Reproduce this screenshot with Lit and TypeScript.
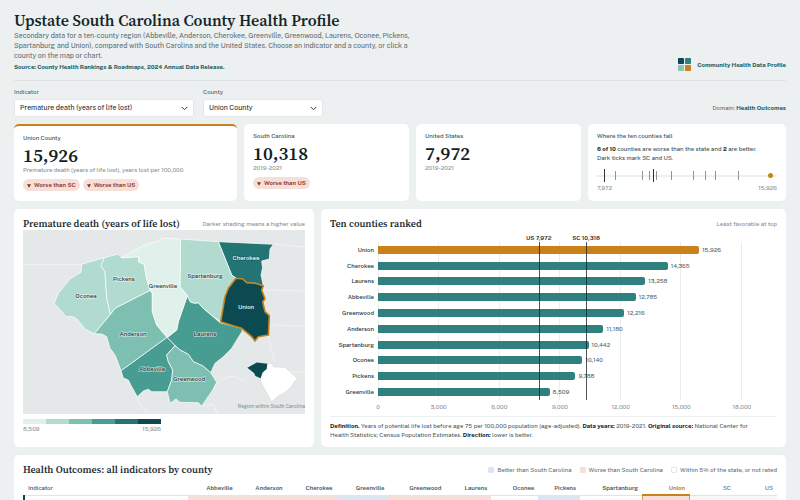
import { LitElement, html, svg, css, nothing } from 'lit';

interface County { name: string; value: number; fill: string; path: string; lx: number; ly: number; light?: boolean }

const LIGHT = '#b1dbce', MID = '#7dbfb1', DEEP = '#489d92', DARK = '#227475', DARKEST = '#0b4a50', PALE = '#e0f0ea';
const SCALE = [PALE, LIGHT, MID, DEEP, DARK, DARKEST];

const COUNTIES: County[] = [
  { name: 'Cherokee', value: 14365, fill: DARK, lx: 246, ly: 260, light: true,
    path: 'M218.3 241.7L273.3 244.3 270 249 269.3 259 261.7 261 262.5 268 261 275 263.3 285.5 255 283.3 246.7 282.7 242.7 279 236 278.3 231.7 275Z' },
  { name: 'Laurens', value: 13258, fill: DEEP, lx: 205, ly: 336,
    path: 'M187.3 295.7L190.5 302 195 303.3 198.3 302.7 203.3 308.3 210 314 220 322.7 241.7 328.3 242.3 331 231.7 348.3 223 357 215 363.3 210.7 372.7 203 366 193.3 361.7 188.3 354.3 180 350 175 345.7 167.3 337.7 176.7 330 178.3 321.7Z' },
  { name: 'Abbeville', value: 12785, fill: DEEP, lx: 152, ly: 371,
    path: 'M121 370.7L167 337.3 175 345.7 166.7 355 168.3 361.7 172.7 370 171.7 380 167.3 391.7 151.7 391.7 148.3 389.3 143.3 391 137.3 396.7 131.7 386.7 128.3 380 123.3 378Z' },
  { name: 'Greenwood', value: 12216, fill: MID, lx: 189, ly: 381,
    path: 'M175 345.7L180 350 188.3 354.3 193.3 361.7 203 366 210.7 372.7 216.7 382.3 212.7 390 201.7 406 198.3 402.7 180 402.3 176 399 170 403.3 167.3 391.7 171.7 380 172.7 370 168.3 361.7 166.7 355Z' },
  { name: 'Anderson', value: 11180, fill: MID, lx: 133, ly: 335.5,
    path: 'M94.3 333.7L110.3 314.3 115 308.3 150 290.3 152.3 293.3 152.3 311.7 156.7 325 167 337.3 121 370.7 118.3 363.3 115 355 110 348.3 106.7 336.7 102 334Z' },
  { name: 'Spartanburg', value: 10442, fill: LIGHT, lx: 205, ly: 278,
    path: 'M180.5 239L218.3 241.7 231.7 275 236 278.3 228.3 288.3 225 296.7 220.7 321.7 210 314 203.3 308.3 198.3 302.7 195 303.3 190.5 302 187.3 295.7 180 286.7Z' },
  { name: 'Oconee', value: 10140, fill: LIGHT, lx: 86, ly: 297.5,
    path: 'M81.7 264.3L104.3 257.7 101 265.7 105 271.7 106.7 298 110.3 314.3 94.3 333.7 85 329 77 319 73.3 316.7 66 316.5 54.3 303.3 58.3 293.3 70 279 81 272.3Z' },
  { name: 'Pickens', value: 9788, fill: LIGHT, lx: 124, ly: 280.5,
    path: 'M104.3 257.7L118 254 121.7 257.7 139 256.7 138.3 261.7 144.3 264.3 146 276 150 290.3 115 308.3 110.3 314.3 106.7 298 105 271.7 101 265.7Z' },
  { name: 'Greenville', value: 8509, fill: PALE, lx: 163, ly: 287.5,
    path: 'M121.7 257.7L131 252 139 248 150 243 156 242 163.3 238.3 180.5 239 180 286.7 187.3 295.7 178.3 321.7 176.7 330 167 337.3 156.7 325 152.3 311.7 152.3 293.3 150 290.3 146 276 144.3 264.3 138.3 261.7 139 256.7Z' },
  { name: 'Union', value: 15926, fill: DARKEST, lx: 246, ly: 308.5, light: true,
    path: 'M236 278.3L242.7 279 246.7 282.7 255 283.3 263.3 285.7 261.7 290 265 299 262.7 301.7 265 311.7 269.3 315.7 268.5 335 258.3 336.7 255 341 251.7 336.7 241.7 328.3 234 326 220.7 321.7 225 296.7 228.3 288.3Z' },
];

const US = 7972, SC = 10318, AXIS_MAX = 18000;
const ranked = [...COUNTIES].sort((a, b) => b.value - a.value);
const fmt = (n: number) => n.toLocaleString('en-US');
const pct = (n: number) => `${(n / AXIS_MAX) * 100}%`;
const strip = (n: number) => `${3.9 + ((n - US) / (15926 - US)) * 92.5}%`;

const COLUMNS: [string, number, string][] = [
  ['Abbeville', 49, 'worse'], ['Anderson', 50, 'worse'], ['Cherokee', 50, 'worse'], ['Greenville', 52, 'better'],
  ['Greenwood', 57, 'worse'], ['Laurens', 46, 'worse'], ['Oconee', 47, ''], ['Pickens', 42, 'better'],
  ['Spartanburg', 62, ''], ['Union', 47, 'worse picked'], ['SC', 46, 'ref'], ['US', 42, 'ref'],
];

class AppRoot extends LitElement {
  static properties = { county: { state: true } };
  declare county: string;

  constructor() {
    super();
    this.county = 'Union';
  }

  static styles = css`
    :host {
      display: block;
      background: #ecf0f0;
      color: #18262b;
      font: 6px/8px "Public Sans", Inter, "Liberation Sans", sans-serif;
      --serif: "Source Serif 4", "Liberation Serif", serif;
      --muted: #5b6a6e;
      --faint: #7f8b8e;
      --teal: #1b5a60;
    }
    * { box-sizing: border-box; }
    h1, h2, h3, p { margin: 0; }
    button, select { font: inherit; color: inherit; }
    .page { padding: 10px 14px 0; }
    header { display: flex; justify-content: space-between; align-items: flex-end; padding-bottom: 9px; border-bottom: 1px solid #dde2e2; }
    h1 { font: 600 16px/20px var(--serif); color: #14252a; }
    .lede { max-width: 404px; font-size: 7px; line-height: 10px; color: var(--muted); margin-top: 1px; }
    .source { font-weight: 700; color: var(--teal); margin-top: 2px; }
    .brand { display: flex; align-items: center; gap: 6px; font-weight: 700; color: var(--teal); }
    .brand svg { width: 13px; height: 13px; }
    .controls { display: flex; align-items: flex-end; gap: 9px; margin: 7px 0; }
    .field { display: grid; gap: 3px; }
    .field label { font-weight: 500; color: var(--muted); }
    .picker { display: grid; align-items: center; }
    .picker > * { grid-area: 1 / 1; }
    .picker select { appearance: none; width: 180px; height: 18px; padding: 0 20px 0 5px; border: 1px solid #e2e7e7; border-radius: 3px; background: #fff; font-size: 7px; }
    .picker.narrow select { width: 120px; }
    .picker svg { justify-self: end; width: 7px; height: 7px; margin-right: 6px; pointer-events: none; }
    .domain { margin-left: auto; color: var(--muted); padding-bottom: 5px; }
    .domain b { color: var(--teal); font-weight: 700; }
    .card { background: #fff; border-radius: 5px; padding: 8px 9px; }
    .stats { display: grid; grid-template-columns: 223fr 165fr 165fr 198fr; gap: 7px; }
    .stats .card { min-height: 77px; }
    .stats .lead { border-top: 2px solid #c9811b; }
    .stats h3 { font: inherit; font-weight: 500; color: #46565a; }
    .big { font: 600 19px/22px var(--serif); color: #111f24; margin-top: 2px; }
    .note { color: var(--faint); }
    .pills { display: flex; gap: 3px; margin-top: 5px; }
    .pill { display: flex; align-items: center; gap: 3px; height: 12px; padding: 0 4px; border-radius: 6px; background: #f7dfd9; color: #8c2b20; font-weight: 600; }
    .pill svg { width: 4px; height: 4px; margin-top: 1px; }
    .fall { line-height: 9px; margin-top: 4px; color: #33444a; }
    .fall b { color: #14252a; }
    .strip { position: relative; height: 14px; margin-top: 7px; }
    .strip::before { content: ""; position: absolute; inset: 6px 0 auto; height: 2px; background: #ebeeee; }
    .tick { position: absolute; top: 2px; width: 1px; height: 9px; background: #8b9698; }
    .tick.mark { top: 0; height: 13px; background: #26363b; }
    .dot { position: absolute; top: 4px; width: 5px; height: 5px; margin-left: -3px; border-radius: 50%; background: #c9811b; }
    .ends { display: flex; justify-content: space-between; color: var(--faint); margin-top: 1px; }
    .panels { display: grid; grid-template-columns: 300fr 465fr; gap: 7px; margin: 8px 0; }
    .head { display: flex; justify-content: space-between; align-items: center; }
    h2 { font: 600 10px/13px var(--serif); color: #18292e; }
    .head span { color: var(--faint); }
    .map { display: block; width: 100%; height: auto; }
    .map text { font-size: 6px; font-weight: 500; text-anchor: middle; fill: #22343a; stroke: #fff; stroke-opacity: .6; stroke-width: 1.4px; stroke-linejoin: round; paint-order: stroke; pointer-events: none; }
    .map text.light { fill: #fff; stroke: #0b4a50; stroke-opacity: .4; }
    .map text.caption { font-size: 5px; font-weight: 400; fill: #7f8b8e; stroke: none; text-anchor: end; }
    .shape { stroke: #fff; stroke-width: .7px; stroke-linejoin: round; cursor: pointer; }
    .shape.on { stroke: #c9811b; stroke-width: 1.6px; }
    .lines { fill: none; stroke: #f6f8f8; stroke-width: .7px; }
    .legend { width: 138px; margin-top: 5px; color: var(--muted); }
    .ramp { display: grid; grid-template-columns: repeat(6, 1fr); height: 5px; }
    .chart { display: grid; grid-template-columns: 44px 1fr; column-gap: 4px; padding: 12px 35px 0 0; }
    .names, .bars { display: grid; grid-template-rows: repeat(10, 1fr); height: 158px; align-items: center; }
    .names { text-align: right; color: #26363b; font-weight: 500; }
    .bars { position: relative; background: repeating-linear-gradient(to right, #e9edee 0 1px, transparent 1px calc(100% / 6)); border-right: 1px solid #e9edee; }
    .row { display: flex; align-items: center; gap: 3px; color: #46565a; }
    .bar { height: 8px; padding: 0; border: 0; border-radius: 0 2px 2px 0; background: #2f807e; cursor: pointer; }
    .bar.on { background: #c9811b; }
    .rule { position: absolute; top: 0; bottom: 0; width: 1px; background: rgba(16, 30, 35, .75); }
    .rule span { position: absolute; bottom: 100%; left: 0; transform: translateX(-50%); white-space: nowrap; font-weight: 600; color: #18262b; }
    .axis { grid-column: 2; display: flex; justify-content: space-between; color: var(--faint); margin-top: 3px; }
    .axis span { width: 0; display: flex; justify-content: center; }
    .defn { line-height: 9px; color: #46565a; border-top: 1px solid #edf0f0; margin-top: 5px; padding: 4px 16px 0 0; }
    .defn b { color: #14252a; }
    .wide { padding-bottom: 0; border-radius: 5px 5px 0 0; }
    .keys { display: flex; gap: 8px; }
    .keys span { display: flex; align-items: center; gap: 3px; color: var(--muted); }
    .keys i { width: 6px; height: 6px; border-radius: 1px; }
    .keys .none { border: 1px solid #e2e7e7; }
    table { width: 100%; table-layout: fixed; border-collapse: collapse; margin-top: 6px; }
    th { height: 13px; padding: 0 4px 1px; text-align: right; font-weight: 600; color: #46565a; border-bottom: 1px solid #e0e5e5; }
    th:first-child { text-align: left; font-weight: 500; }
    th.picked { color: #b87008; border-bottom: 2px solid #c9811b; }
    th.ref { font-weight: 400; color: var(--muted); }
    td { height: 5px; padding: 0; }
    td:first-child { border-left: 2px solid #0b4a50; }
    .worse { background: #f7dfd9; }
    .better { background: #dbe6f3; }
    th.worse, th.better { background: none; }
    td.picked { border: solid #dda04e; border-width: 0 1px; }
    td.ref { background: #f6f8f8; }
  `;

  private chevron() {
    return html`<svg viewBox="0 0 8 8" aria-hidden="true"><path d="M1.2 2.6L4 5.4 6.8 2.6" fill="none" stroke="#26363b" stroke-width="1.1" stroke-linecap="round" stroke-linejoin="round"/></svg>`;
  }

  private pill(text: string) {
    return html`<span class="pill"><svg viewBox="0 0 8 7" aria-hidden="true"><path d="M0 0H8L4 7Z" fill="#8c2b20"/></svg>${text}</span>`;
  }

  private pick(name: string) {
    this.county = name;
  }

  private map() {
    const drawn = [...COUNTIES].sort((a, b) => Number(a.name === this.county) - Number(b.name === this.county));
    return html`<svg class="map" viewBox="23 230 282 184" role="img" aria-label="County map">
      <rect x="23" y="230" width="282" height="184" fill="#e4e8e8"/>
      <path class="lines" d="M23 264.7H82M273 244L305 247M264 290L305 291M269 325L305 326M137 397L140 405 149 414M212 390L222 379 234 376 246 382M268 335L274 361M285 372H305M202 406L214 404 217 414"/>
      ${drawn.map(c => svg`<path class="shape ${c.name === this.county ? 'on' : ''}" fill=${c.fill} d=${c.path} @click=${() => this.pick(c.name)}/>`)}
      ${COUNTIES.map(c => svg`<text class=${c.light ? 'light' : ''} x=${c.lx} y=${c.ly}>${c.name}</text>`)}
      <path fill="#fff" stroke="#cfd5d5" stroke-width=".5" d="M266.7 363.7L271.7 363.3 273.3 367 285 367.3 297 378.3 290 388 284 393 277 396.7 271.7 402 266 391.7 260 380Z"/>
      <path fill="#0b4a50" d="M247.3 367.7L256.7 362.6 267.3 363.7 266.7 369 262.5 372.5 260.5 378.3 255.5 376 254 373Z"/>
      <text class="caption" x="305" y="408">Region within South Carolina</text>
    </svg>`;
  }

  render() {
    return html`<div class="page">
      <header>
        <div>
          <h1>Upstate South Carolina County Health Profile</h1>
          <p class="lede">Secondary data for a ten-county region (Abbeville, Anderson, Cherokee, Greenville, Greenwood, Laurens, Oconee, Pickens, Spartanburg and Union), compared with South Carolina and the United States. Choose an indicator and a county, or click a county on the map or chart.</p>
          <p class="source">Source: County Health Rankings &amp; Roadmaps, 2024 Annual Data Release.</p>
        </div>
        <div class="brand">
          <svg viewBox="0 0 13 13" aria-hidden="true"><rect width="6" height="6" rx=".8" fill="#0b4a50"/><rect x="7" width="6" height="6" rx=".8" fill="#2f807e"/><rect y="7" width="6" height="6" rx=".8" fill="#86c5b8"/><rect x="7" y="7" width="6" height="6" rx=".8" fill="#c9811b"/></svg>
          Community Health Data Profile
        </div>
      </header>
      <div class="controls">
        <div class="field"><label for="ind">Indicator</label>
          <div class="picker"><select id="ind"><option>Premature death (years of life lost)</option></select>${this.chevron()}</div></div>
        <div class="field"><label for="cty">County</label>
          <div class="picker narrow"><select id="cty"><option>Union County</option></select>${this.chevron()}</div></div>
        <div class="domain">Domain: <b>Health Outcomes</b></div>
      </div>
      <section class="stats">
        <div class="card lead"><h3>Union County</h3><div class="big">15,926</div><div class="note">Premature death (years of life lost), years lost per 100,000</div>
          <div class="pills">${this.pill('Worse than SC')}${this.pill('Worse than US')}</div></div>
        <div class="card"><h3>South Carolina</h3><div class="big">10,318</div><div class="note">2019-2021</div>
          <div class="pills">${this.pill('Worse than US')}</div></div>
        <div class="card"><h3>United States</h3><div class="big">7,972</div><div class="note">2019-2021</div></div>
        <div class="card"><h3>Where the ten counties fall</h3>
          <p class="fall"><b>6 of 10</b> counties are worse than the state and <b>2</b> are better.<br>Dark ticks mark SC and US.</p>
          <div class="strip">
            ${COUNTIES.map(c => c.name === this.county ? nothing : html`<span class="tick" style="left:${strip(c.value)}"></span>`)}
            ${[US, SC].map(v => html`<span class="tick mark" style="left:${strip(v)}"></span>`)}
            ${COUNTIES.map(c => c.name === this.county ? html`<span class="dot" style="left:${strip(c.value)}"></span>` : nothing)}
          </div>
          <div class="ends"><span>7,972</span><span>15,926</span></div></div>
      </section>
      <section class="panels">
        <div class="card">
          <div class="head"><h2>Premature death (years of life lost)</h2><span>Darker shading means a higher value</span></div>
          ${this.map()}
          <div class="legend"><div class="ramp">${SCALE.map(c => html`<span style="background:${c}"></span>`)}</div>
            <div class="ends"><span>8,509</span><span>15,926</span></div></div>
        </div>
        <div class="card">
          <div class="head"><h2>Ten counties ranked</h2><span>Least favorable at top</span></div>
          <div class="chart">
            <div class="names">${ranked.map(c => html`<span>${c.name}</span>`)}</div>
            <div class="bars">
              ${ranked.map(c => html`<div class="row"><button class="bar ${c.name === this.county ? 'on' : ''}" aria-label=${c.name} style="width:${pct(c.value)}" @click=${() => this.pick(c.name)}></button>${fmt(c.value)}</div>`)}
              <div class="rule" style="left:${pct(US)}"><span>US 7,972</span></div>
              <div class="rule" style="left:${pct(SC)}"><span>SC 10,318</span></div>
            </div>
            <div class="axis">${[0, 3000, 6000, 9000, 12000, 15000, 18000].map(v => html`<span>${fmt(v)}</span>`)}</div>
          </div>
          <p class="defn"><b>Definition.</b> Years of potential life lost before age 75 per 100,000 population (age-adjusted). <b>Data years:</b> 2019-2021. <b>Original source:</b> National Center for Health Statistics; Census Population Estimates. <b>Direction:</b> lower is better.</p>
        </div>
      </section>
      <section class="card wide">
        <div class="head"><h2>Health Outcomes: all indicators by county</h2>
          <div class="keys"><span><i class="better"></i>Better than South Carolina</span><span><i class="worse"></i>Worse than South Carolina</span><span><i class="none"></i>Within 5% of the state, or not rated</span></div></div>
        <table>
          <colgroup><col style="width:${(164 / 754) * 100}%">${COLUMNS.map(([, w]) => html`<col style="width:${(w / 754) * 100}%">`)}</colgroup>
          <thead><tr><th scope="col">Indicator</th>${COLUMNS.map(([n, , k]) => html`<th scope="col" class=${k}>${n}</th>`)}</tr></thead>
          <tbody><tr><td></td>${COLUMNS.map(([, , k]) => html`<td class=${k}></td>`)}</tr></tbody>
        </table>
      </section>
    </div>`;
  }
}
customElements.define('app-root', AppRoot);
